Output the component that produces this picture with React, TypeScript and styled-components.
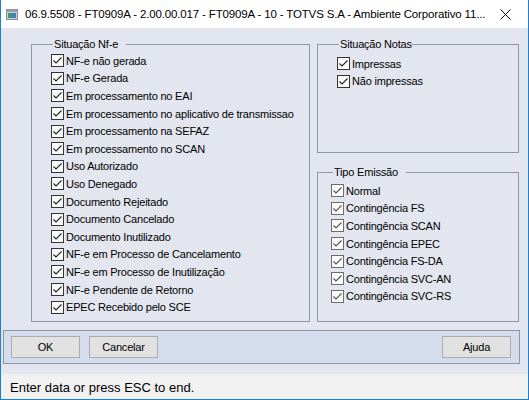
import React, { FC } from 'react';
import styled, { createGlobalStyle } from 'styled-components';

const GlobalStyle = createGlobalStyle`
  html, body {
    margin: 0;
    padding: 0;
    background: #ffffff;
  }
  * {
    box-sizing: border-box;
  }
`;

const Window = styled.div`
  width: 529px;
  height: 400px;
  display: flex;
  flex-direction: column;
  border: 1px solid #1a7fd6;
  border-top: none;
  background: #e3e6ef;
  font-family: 'Liberation Sans', Arial, sans-serif;
  color: #000;
  overflow: hidden;
`;

const TitleBar = styled.div`
  height: 28px;
  flex: none;
  display: flex;
  align-items: center;
  background: #ffffff;
  padding: 0 0 0 5px;
  font-family: 'Liberation Sans', Arial, sans-serif;
  font-size: 11.5px;
  letter-spacing: -0.15px;
  color: #000;
`;

const TitleText = styled.span`
  flex: 1;
  margin-left: 7px;
  white-space: nowrap;
  overflow: hidden;
`;

const CloseButton = styled.div`
  width: 30px;
  height: 28px;
  display: flex;
  align-items: center;
  justify-content: center;
  margin-right: 8px;
`;

const Body = styled.div`
  flex: 1;
  display: grid;
  grid-template-columns: 279px 202px;
  column-gap: 7px;
  padding: 9px 8px 0 30px;
  align-items: start;
`;

const RightColumn = styled.div`
  display: flex;
  flex-direction: column;
  gap: 12px;
`;

const Group = styled.fieldset<{ $height: number; $padLeft: number; $padTop: number }>`
  margin: 0;
  height: ${(p) => p.$height}px;
  padding: ${(p) => p.$padTop}px 0 0 ${(p) => p.$padLeft}px;
  border: 1px solid #8d97a5;
  min-width: 0;
`;

const Legend = styled.legend<{ $gapRight: number }>`
  font-size: 11px;
  letter-spacing: -0.2px;
  line-height: 14px;
  padding: 0 ${(p) => p.$gapRight}px 0 1px;
  margin-left: 2px;
`;

const Row = styled.label`
  height: 17.6px;
  display: flex;
  align-items: center;
  gap: 2px;
  font-size: 11px;
  letter-spacing: -0.2px;
  white-space: nowrap;
`;

const Box = styled.span<{ $muted?: boolean }>`
  width: 13px;
  height: 13px;
  flex: none;
  border: 1px solid ${(p) => (p.$muted ? '#6d6d6d' : '#333333')};
  background: #fbfbfb;
  display: flex;
  align-items: center;
  justify-content: center;
`;

const ButtonBar = styled.div`
  flex: none;
  margin: 0 8px 0 2px;
  height: 34px;
  border: 1px solid #8a97a8;
  background: #d5dcec;
  display: flex;
  align-items: center;
  padding: 0 8px 0 7px;
  gap: 9px;
`;

const Button = styled.button`
  width: 69px;
  height: 22px;
  border: 1px solid #adadad;
  background: #e1e1e1;
  font-family: 'Liberation Sans', Arial, sans-serif;
  font-size: 11px;
  letter-spacing: -0.2px;
  color: #000;
  padding: 0;
`;

const Spacer = styled.div`
  flex: 1;
`;

const StatusBar = styled.div`
  flex: none;
  margin-top: 10px;
  height: 25px;
  border-top: 1px solid #eef0f5;
  background: #f1f1f1;
  display: flex;
  align-items: center;
  padding-left: 9px;
  font-size: 13px;
`;

const CheckBox: FC<{ muted?: boolean }> = ({ muted }) => (
  <Box $muted={muted}>
    <svg width="11" height="11" viewBox="0 0 11 11">
      <polyline
        points="1.5,5.5 4,8 9.5,2.5"
        fill="none"
        stroke={muted ? '#555' : '#222'}
        strokeWidth="1.1"
      />
    </svg>
  </Box>
);

const Item: FC<{ text: string; muted?: boolean }> = ({ text, muted }) => (
  <Row>
    <CheckBox muted={muted} />
    <span>{text}</span>
  </Row>
);

const situacaoNfe = [
  'NF-e não gerada',
  'NF-e Gerada',
  'Em processamento no EAI',
  'Em processamento no aplicativo de transmissao',
  'Em processamento na SEFAZ',
  'Em processamento no SCAN',
  'Uso Autorizado',
  'Uso Denegado',
  'Documento Rejeitado',
  'Documento Cancelado',
  'Documento Inutilizado',
  'NF-e em Processo de Cancelamento',
  'NF-e em Processo de Inutilização',
  'NF-e Pendente de Retorno',
  'EPEC Recebido pelo SCE',
];

const situacaoNotas = ['Impressas', 'Não impressas'];

const tipoEmissao = [
  'Normal',
  'Contingência FS',
  'Contingência SCAN',
  'Contingência EPEC',
  'Contingência FS-DA',
  'Contingência SVC-AN',
  'Contingência SVC-RS',
];

const AppIcon = () => (
  <svg width="12" height="11" viewBox="0 0 12 11">
    <rect x="0.5" y="0.5" width="11" height="10" fill="#c9ced6" stroke="#8a8f99" />
    <rect x="1" y="1" width="10" height="2" fill="#9aa2ad" />
    <rect x="2" y="4" width="4" height="5" fill="#3f9a6a" />
    <rect x="6" y="4" width="4" height="5" fill="#3d7fc4" />
  </svg>
);

const App: FC = () => {
  return (
    <>
      <GlobalStyle />
      <Window>
        <TitleBar>
          <AppIcon />
          <TitleText>
            06.9.5508 - FT0909A - 2.00.00.017 - FT0909A - 10 - TOTVS S.A - Ambiente Corporativo 11...
          </TitleText>
          <CloseButton>
            <svg width="11" height="11" viewBox="0 0 11 11">
              <path d="M0.5 0.5 L10.5 10.5 M10.5 0.5 L0.5 10.5" stroke="#111" strokeWidth="1" />
            </svg>
          </CloseButton>
        </TitleBar>
        <Body>
          <Group $height={285} $padLeft={19} $padTop={1}>
            <Legend $gapRight={8}>Situação Nf-e</Legend>
            {situacaoNfe.map((t) => (
              <Item key={t} text={t} />
            ))}
          </Group>
          <RightColumn>
            <Group $height={116} $padLeft={19} $padTop={4}>
              <Legend $gapRight={0}>Situação Notas</Legend>
              {situacaoNotas.map((t) => (
                <Item key={t} text={t} />
              ))}
            </Group>
            <Group $height={157} $padLeft={13} $padTop={3}>
              <Legend $gapRight={8}>Tipo Emissão</Legend>
              {tipoEmissao.map((t) => (
                <Item key={t} text={t} muted />
              ))}
            </Group>
          </RightColumn>
        </Body>
        <ButtonBar>
          <Button>OK</Button>
          <Button>Cancelar</Button>
          <Spacer />
          <Button>Ajuda</Button>
        </ButtonBar>
        <StatusBar>Enter data or press ESC to end.</StatusBar>
      </Window>
    </>
  );
};

export default App;
